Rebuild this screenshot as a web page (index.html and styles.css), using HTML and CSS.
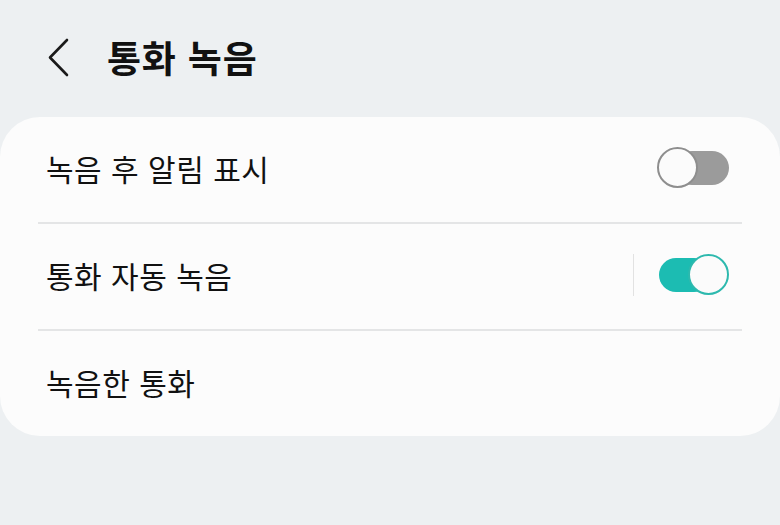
FILE: index.html
```html
<!DOCTYPE html>
<html lang="ko">
<head>
<meta charset="utf-8">
<link rel="stylesheet" href="styles.css">
</head>
<body>
<header class="top">
  <svg class="back" width="24" height="40" viewBox="0 0 24 40"><polyline points="20,3 3,20.5 20,38" fill="none" stroke="#1a1a1a" stroke-width="2.6" stroke-linecap="round" stroke-linejoin="round"/></svg>
  <h1 class="title">통화 녹음</h1>
</header>
<main class="card">
  <div class="row">
    <span class="label">녹음 후 알림 표시</span>
    <span class="switch off"><span class="thumb"></span></span>
  </div>
  <div class="divider"></div>
  <div class="row">
    <span class="label">통화 자동 녹음</span>
    <span class="vsep"></span>
    <span class="switch on"><span class="thumb"></span></span>
  </div>
  <div class="divider"></div>
  <div class="row">
    <span class="label">녹음한 통화</span>
  </div>
</main>
</body>
</html>
```
FILE: styles.css
```css
html, body {
  margin: 0;
  padding: 0;
  background: #edf0f2;
  font-family: "Noto Sans CJK KR", "Noto Sans", sans-serif;
  color: #111;
}
.top {
  height: 117px;
  display: flex;
  align-items: center;
  padding-left: 47px;
  box-sizing: border-box;
  padding-bottom: 4px;
}
.back {
  display: block;
  margin-top: 0;
}
.title {
  margin: 0 0 0 36px;
  font-size: 37px;
  font-weight: 700;
  letter-spacing: 0.8px;
  color: #111;
}
.card {
  background: #fcfcfc;
  border-radius: 40px;
  padding: 0 38px;
}
.row {
  height: 105px;
  display: flex;
  align-items: center;
  padding-left: 8px;
  padding-bottom: 3px;
  box-sizing: border-box;
}
.label {
  font-size: 30px;
  flex: 1;
  letter-spacing: 0.5px;
}
.divider {
  height: 2px;
  background: #e4e5e6;
}
.vsep {
  width: 1.5px;
  height: 42px;
  background: #e2e2e2;
  margin-right: 23px;
}
.switch {
  position: relative;
  width: 72px;
  height: 42px;
  margin-right: 13px;
}
.switch::before {
  content: "";
  position: absolute;
  top: 4px;
  height: 34px;
  border-radius: 17px;
}
.switch.off::before {
  left: 18px;
  right: 0;
  background: #9b9b9b;
}
.switch.on::before {
  left: 2px;
  right: 18px;
  background: #1cbcb2;
}
.thumb {
  position: absolute;
  top: 0;
  width: 41px;
  height: 41px;
  box-sizing: border-box;
  border-radius: 50%;
  background: #fbfbfb;
}
.switch.off .thumb {
  left: 0;
  border: 2.5px solid #8e8e8e;
}
.switch.on .thumb {
  right: 0;
  border: 2.5px solid #2db9ae;
}
```
